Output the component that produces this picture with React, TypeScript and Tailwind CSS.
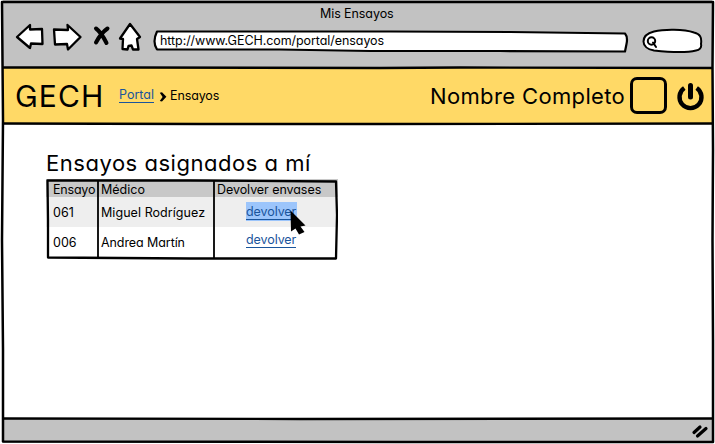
import React from "react";

function NavIcons() {
  return (
    <svg className="h-[32px] w-[130px] shrink-0" viewBox="14 20 130 32" fill="white" stroke="black" strokeWidth="2.3" strokeLinejoin="round" strokeLinecap="round">
      <path d="M17 37 L30 25 L30 29.500 L42 29 L42.500 44 L31 43.500 L30 48 Z" />
      <path d="M54 29.500 L68 30 L67.500 25 L80.500 37 L68 49.500 L67 44 L55 44.500 L54.500 37 Z" />
      <path d="M96 28.500 Q101 32 106.500 43 M107.500 28.500 Q101 33 96 42.500" fill="none" strokeWidth="4" />
      <path d="M130 24 L140 37 L137 39 L138.500 49.500 L133 49.500 L131.500 45.500 L128.500 46 L127.500 49.500 L122.500 49 L123 39 L120 38.500 Z" />
    </svg>
  );
}

function UrlBar() {
  return (
    <div className="relative ml-[8px] h-[23px] w-[478px] shrink-0 pl-[8px] pt-[4px]">
      <svg className="absolute inset-0" width="478" height="23" viewBox="152 30 478 23" fill="white" stroke="black" strokeWidth="2.2" strokeLinejoin="round">
        <path d="M157 31.500 L390 31.500 L510 32 L625 33.500 Q628 37 626.500 44 L625 51.500 L500 51 L370 51 L280 49.500 L157 49.500 Q152 42 157 31.500 Z" />
      </svg>
      <span className="relative block whitespace-nowrap text-[12.5px] leading-[14px] tracking-[-0.07px]">http://www.GECH.com/portal/ensayos</span>
    </div>
  );
}

function SearchBox() {
  return (
    <svg className="ml-[12px] h-[26px] w-[62px] shrink-0" viewBox="642 28 62 26" fill="white" stroke="black" strokeWidth="2" strokeLinejoin="round" strokeLinecap="round">
      <path d="M654 31.500 C664 29 684 29 694 32.500 C700 34 702 37 701 44 C702 48 699 50 696 50.500 C686 53 668 52 654 50.500 C640 48 640 35 654 31.500 Z" />
      <circle cx="651.500" cy="41" r="3.700" strokeWidth="2" />
      <path d="M653 42.500 L656 47" />
    </svg>
  );
}

function PowerIcon() {
  return (
    <svg className="ml-[8px] h-[30px] w-[30px]" viewBox="675 82 30 30" fill="none" stroke="black" strokeWidth="4.400" strokeLinecap="butt">
      <path d="M684.300 89 A11 11 0 1 0 696.700 89" />
      <path d="M690.500 86.400 V98" strokeWidth="5" strokeLinecap="round" />
    </svg>
  );
}

function WindowFrame() {
  return (
    <svg className="pointer-events-none absolute inset-0" width="715" height="444" viewBox="0 0 715 444" fill="none" stroke="black" strokeWidth="2" strokeLinejoin="round">
      <path d="M2 2 L713 2 L712.500 67 L713 150 L712.500 240 L713 340 L713 442 L400 442 L3 441.500 L3 350 L2 240 L3 120 L2 2 Z" strokeWidth="2.500" />
      <path d="M2 67.500 L130 67.500 L380 68 L460 67.500 L713 68 M2 123.500 L200 124 L380 124 L713 123.500 M2 418.500 L300 419 L713 418.500" strokeWidth="2.300" />
    </svg>
  );
}

function TableLines() {
  return (
    <svg className="pointer-events-none absolute inset-0" width="292" height="81" viewBox="46 179 292 81" fill="none" stroke="black" strokeWidth="2.300" strokeLinejoin="round">
      <path d="M47.500 180.500 L190 180.500 L336 181.500 L337 215 L336 258.500 L190 258.500 L48 257.500 L48 220 Z" />
      <path d="M98 181 L98 258 M214 181 L214 258" strokeWidth="1.800" />
    </svg>
  );
}

function Cursor() {
  return (
    <svg className="absolute left-[244px] top-[31px]" width="17" height="26" viewBox="290 210 17 26">
      <path d="M290.500 210.500 L305.500 225.500 L300.500 226.500 L304.500 232 L299 234.500 L295.500 228.500 L291 231.500 Z" />
    </svg>
  );
}

export default function App() {
  return (
    <div className="relative flex h-[444px] w-[715px] flex-col overflow-hidden bg-white font-[Inter,sans-serif] text-black [font-feature-settings:'cv11','cv10']">
      <header className="mx-[3px] h-[67px] shrink-0 bg-[#c2c2c2]">
        <div className="h-[20px] pl-[317px] pt-[7px] text-[12.5px] leading-[14px] tracking-[-0.08px]">Mis Ensayos</div>
        <div className="flex items-start pl-[11px]">
          <NavIcons />
          <div className="mt-[10px]"><UrlBar /></div>
          <div className="mt-[8px]"><SearchBox /></div>
        </div>
      </header>

      <div className="mx-[3px] flex h-[57px] shrink-0 items-center bg-[#ffd966] pl-[12px]">
        <h1 className="w-[104px] text-[30px] leading-[36px] tracking-[1.1px]">GECH</h1>
        <nav className="flex items-center text-[12.5px] leading-[14px]">
          <a className="w-[35px] border-b border-[#1a559c] text-[#1a559c]">Portal</a>
          <svg className="ml-[5px] mt-[2px]" width="9" height="10" viewBox="0 0 9 10"><path d="M.8 .8 L3 .3 L7.400 4.800 L3 9.400 L.8 9 L3.600 4.900 Z" /></svg>
          <span className="ml-[2px] w-[50px] tracking-[-0.12px]">Ensayos</span>
        </nav>
        <div className="ml-[210px] w-[200px] whitespace-nowrap text-[22px] leading-[26px] tracking-[0.36px]">Nombre Completo</div>
        <div className="h-[37px] w-[37px] shrink-0 rounded-[7px] border-[3px] border-black" />
        <PowerIcon />
      </div>

      <main className="h-[295px] shrink-0 pl-[46px] pt-[25px]">
        <h2 className="h-[30px] whitespace-nowrap text-[22px] leading-[28px] tracking-[0.53px]">Ensayos asignados a mí</h2>
        <div className="relative h-[81px] w-[292px] whitespace-nowrap text-[12.5px] leading-[14px]">
          <div className="grid h-[18px] grid-cols-[52px_116px_124px] bg-[#c8c8c8] pt-[4px]">
            <span className="pl-[7px] tracking-[-0.2px]">Ensayo</span>
            <span className="pl-[3px]">Médico</span>
            <span className="pl-[3px] tracking-[-0.06px]">Devolver envases</span>
          </div>
          <div className="grid h-[30px] grid-cols-[52px_116px_124px] bg-[#eeeeee]">
            <span className="pl-[7px] pt-[9px]">061</span>
            <span className="pl-[3px] pt-[9px] tracking-[0.06px]">Miguel Rodríguez</span>
            <span className="ml-[32px] mt-[5px] h-[19px] w-[51px] bg-[#9cc5fb] pt-[3px] text-[#1a559c]">
              <a className="block h-[15px] w-[50px] border-b border-[#1a559c] tracking-[-0.08px]">devolver</a>
            </span>
          </div>
          <div className="grid h-[31px] grid-cols-[52px_116px_124px]">
            <span className="pl-[7px] pt-[9px]">006</span>
            <span className="pl-[3px] pt-[9px] tracking-[-0.08px]">Andrea Martín</span>
            <a className="ml-[32px] mt-[6px] h-[15px] w-[50px] border-b border-[#1a559c] tracking-[-0.08px] text-[#1a559c]">devolver</a>
          </div>
          <TableLines />
          <Cursor />
        </div>
      </main>

      <footer className="mx-[3px] flex h-[24px] shrink-0 justify-end bg-[#c2c2c2] pr-[3px] pt-[5px]">
        <svg width="18" height="16" viewBox="692 424 18 16" stroke="black" strokeWidth="3.200" strokeLinecap="round"><path d="M695 432.500 L701 427 M698.500 436 L707 428.500" /></svg>
      </footer>
      <WindowFrame />
    </div>
  );
}
